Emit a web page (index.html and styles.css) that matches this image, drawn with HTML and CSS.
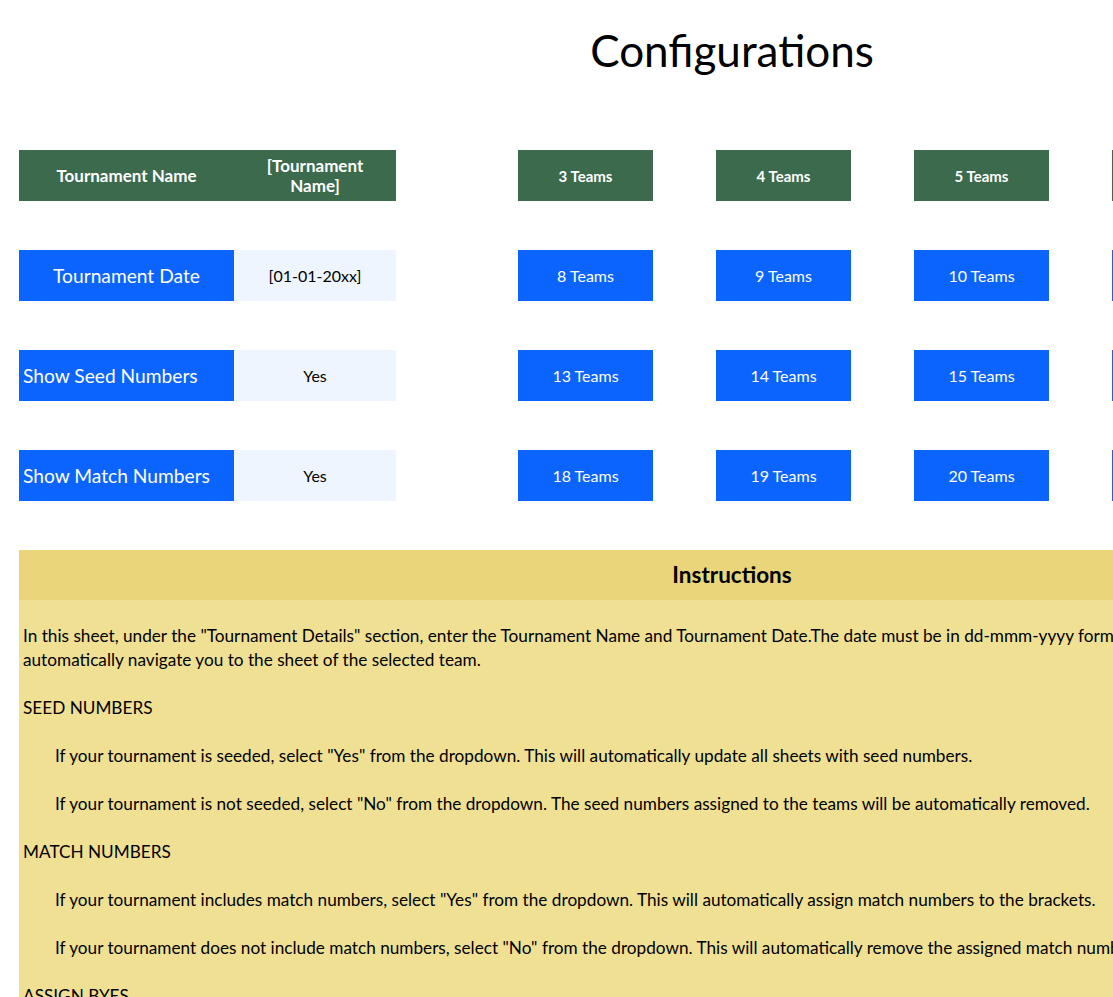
FILE: index.html
```html
<!DOCTYPE html>
<html lang="en">
<head>
    <meta charset="UTF-8">
    <meta name="viewport" content="width=device-width, initial-scale=1.0">
    <title>Configurations</title>
    <link rel="stylesheet" href="styles.css">
</head>
<body>
    <div class="sheet">
        <h1 class="title">Configurations</h1>

        <div class="config">
            <div class="details">
                <div class="cell head">Tournament Name</div>
                <div class="cell head">[Tournament Name]</div>

                <div class="cell label center">Tournament Date</div>
                <div class="cell value">[01-01-20xx]</div>

                <div class="cell label">Show Seed Numbers</div>
                <div class="cell value">Yes</div>

                <div class="cell label">Show Match Numbers</div>
                <div class="cell value">Yes</div>
            </div>

            <div class="teams">
                <button class="team top">3 Teams</button>
                <button class="team top">4 Teams</button>
                <button class="team top">5 Teams</button>
                <button class="team top">6 Teams</button>
                <button class="team top">7 Teams</button>

                <button class="team">8 Teams</button>
                <button class="team">9 Teams</button>
                <button class="team">10 Teams</button>
                <button class="team">11 Teams</button>
                <button class="team">12 Teams</button>

                <button class="team">13 Teams</button>
                <button class="team">14 Teams</button>
                <button class="team">15 Teams</button>
                <button class="team">16 Teams</button>
                <button class="team">17 Teams</button>

                <button class="team">18 Teams</button>
                <button class="team">19 Teams</button>
                <button class="team">20 Teams</button>
                <button class="team">21 Teams</button>
                <button class="team">22 Teams</button>
            </div>
        </div>

        <div class="instructions">
            <div class="instr_head">Instructions</div>
            <div class="instr_body">
                <p>In this sheet, under the "Tournament Details" section, enter the Tournament Name and Tournament Date.The date must be in dd-mmm-yyyy format. Click on any of the team buttons to<br>automatically navigate you to the sheet of the selected team.</p>

                <p>SEED NUMBERS</p>
                <p class="indent">If your tournament is seeded, select "Yes" from the dropdown. This will automatically update all sheets with seed numbers.</p>
                <p class="indent">If your tournament is not seeded, select "No" from the dropdown. The seed numbers assigned to the teams will be automatically removed.</p>

                <p>MATCH NUMBERS</p>
                <p class="indent">If your tournament includes match numbers, select "Yes" from the dropdown. This will automatically assign match numbers to the brackets.</p>
                <p class="indent">If your tournament does not include match numbers, select "No" from the dropdown. This will automatically remove the assigned match numbers.</p>

                <p>ASSIGN BYES</p>
                <p class="indent">Byes are assigned automatically based on the number of teams in the selected bracket.</p>
            </div>
        </div>
    </div>
</body>
</html>
```

FILE: styles.css
```css
html, body {
    overflow: hidden;
}

body {
    margin: 0;
    padding-left: 19px;
    background-color: #fff;
    color: #000;
    font-family: Lato, "Open Sans", sans-serif;
    font-size: 16px;
}

.sheet {
    width: 1426px;
}

.title {
    margin: 0;
    padding-top: 18px;
    height: 132px;
    line-height: 64px;
    font-size: 44px;
    font-weight: normal;
    text-align: center;
}

.config {
    display: flex;
    align-items: flex-start;
}

.details {
    display: grid;
    grid-template-columns: 215px 162px;
    grid-auto-rows: 51px;
    row-gap: 49px;
}

.cell {
    display: flex;
    align-items: center;
    justify-content: center;
    text-align: center;
}

.head {
    background-color: #3b6a4d;
    color: white;
    font-weight: bold;
    font-size: 17px;
    line-height: 20px;
    padding: 0 18px;
}

.label {
    background-color: #0b64fe;
    color: white;
    font-size: 19.2px;
    justify-content: flex-start;
    padding-left: 4px;
}

.label.center {
    justify-content: center;
    padding-left: 0;
}

.value {
    background-color: #eef5ff;
}

.teams {
    display: grid;
    grid-template-columns: repeat(5, 135px);
    grid-auto-rows: 51px;
    column-gap: 63px;
    row-gap: 49px;
    margin-left: 122px;
}

.team {
    border: none;
    padding: 0;
    background-color: #0b64fe;
    color: white;
    font-family: inherit;
    font-size: 16px;
    cursor: pointer;
}

.team.top {
    background-color: #3b6a4d;
    font-weight: bold;
    font-size: 15px;
}

.instructions {
    margin-top: 49px;
}

.instr_head {
    height: 50px;
    line-height: 50px;
    background-color: #ead57b;
    text-align: center;
    font-weight: bold;
    font-size: 22.5px;
}

.instr_body {
    background-color: #efe094;
    padding: 24px 4px 0;
    line-height: 24px;
    font-size: 17.2px;
    white-space: nowrap;
}

.instr_body p {
    margin: 0 0 24px;
}

.indent {
    padding-left: 32px;
}
```
